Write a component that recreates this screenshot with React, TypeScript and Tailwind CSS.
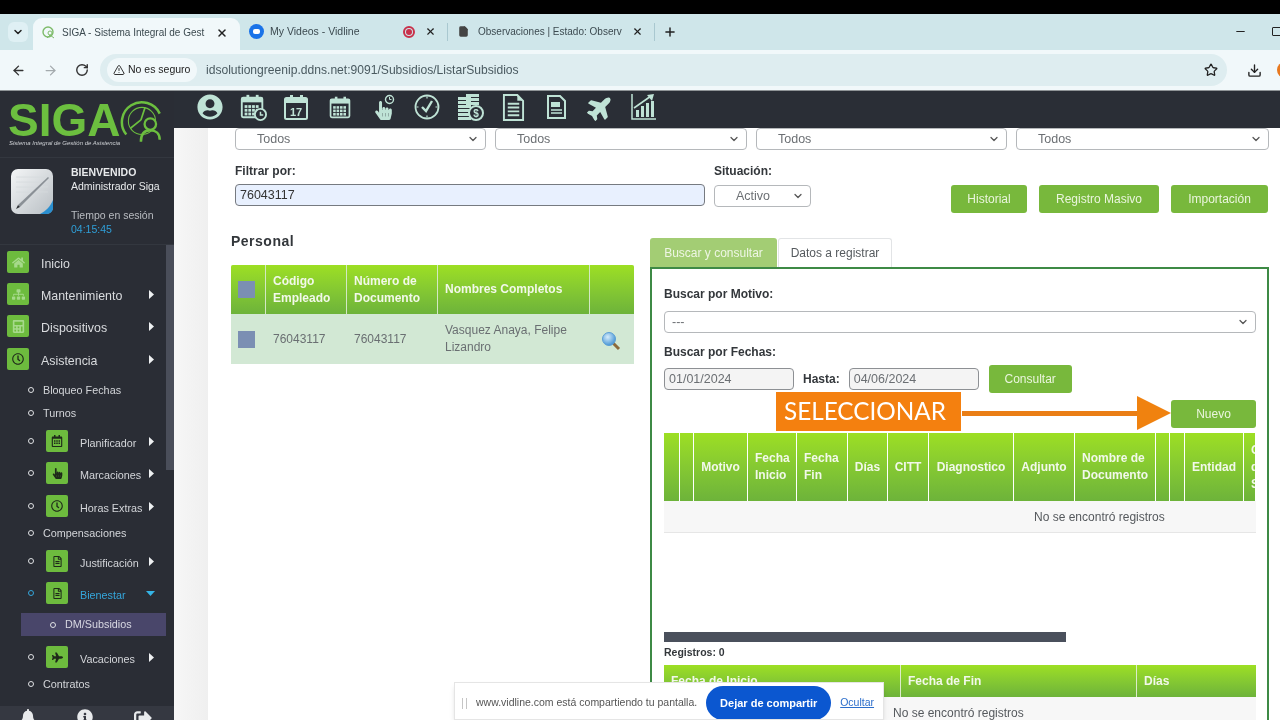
import React from "react";
import { ChevronDown, ArrowLeft, ArrowRight, RotateCw, TriangleAlert, Star, Download, X, Plus, Minus, File } from "lucide-react";
import { FaHome, FaSitemap, FaCalculator, FaRegClock, FaRegCalendarAlt, FaHandPointer, FaRegFileAlt, FaPlane, FaBell, FaInfoCircle, FaSignOutAlt, FaUserCircle } from "react-icons/fa";

const ic = "#bfe3d6";

function TopIcon({ children }: { children: React.ReactNode }) {
  return <div className="w-[43.4px] h-[28px] shrink-0 flex items-center justify-center">{children}</div>;
}

function CalBase({ num }: { num?: boolean }) {
  return (
    <>
      <rect x="3" y="5" width="22" height="21" rx="1.5" fill="none" stroke={ic} strokeWidth="2" />
      <rect x="3" y="5" width="22" height="5" fill={ic} />
      <rect x="8" y="2" width="3" height="6" fill={ic} />
      <rect x="18" y="2" width="3" height="6" fill={ic} />
      {!num && [13, 17, 21].map((y) => [6, 10, 14, 18].map((x) => <rect key={`${x}-${y}`} x={x} y={y} width="3" height="3" fill={ic} />))}
    </>
  );
}

function TopBar() {
  return (
    <div className="h-[37px] bg-[#2a2e36] flex items-start pt-[2px] pl-[14px] shrink-0">
      <TopIcon><FaUserCircle size={26} color={ic} /></TopIcon>
      <TopIcon>
        <svg width="28" height="28" viewBox="0 0 30 30"><CalBase /><circle cx="23" cy="23" r="6" fill="#2a2e36" stroke={ic} strokeWidth="2" /><path d="M23 20v3.5h3" stroke={ic} strokeWidth="1.6" fill="none" /></svg>
      </TopIcon>
      <TopIcon>
        <svg width="28" height="28" viewBox="0 0 28 28"><CalBase num /><text x="14" y="23" textAnchor="middle" fontSize="11" fontWeight="700" fill={ic} fontFamily="Liberation Sans">17</text></svg>
      </TopIcon>
      <TopIcon>
        <svg width="24" height="24" viewBox="0 0 28 28"><CalBase /></svg>
      </TopIcon>
      <TopIcon>
        <div className="relative w-[24px] h-[26px] flex items-end justify-center">
          <FaHandPointer size={19} color={ic} />
          <svg className="absolute right-0 top-0" width="11" height="11" viewBox="0 0 11 11"><circle cx="5.5" cy="5.5" r="4" fill="none" stroke={ic} strokeWidth="1.4" /><path d="M5.5 3v2.5h2" stroke={ic} fill="none" /></svg>
        </div>
      </TopIcon>
      <TopIcon>
        <svg width="26" height="26" viewBox="0 0 26 26"><circle cx="13" cy="13" r="11.5" fill="none" stroke={ic} strokeWidth="1.8" /><path d="M8 13l4 4 6-10" stroke={ic} strokeWidth="2.4" fill="none" /><path d="M13 2.5v2M13 21.5v2M2.5 13h2M21.5 13h2" stroke={ic} strokeWidth="1.2" /></svg>
      </TopIcon>
      <TopIcon>
        <svg width="28" height="28" viewBox="0 0 28 28">
          {[4, 8, 12, 16, 20, 24].map((y) => <rect key={y} x="2" y={y} width="13" height="3" fill={ic} />)}
          {[1, 5, 9].map((y) => <rect key={y} x="10" y={y} width="13" height="3" fill={ic} />)}
          <circle cx="20" cy="20" r="7" fill="#2a2e36" stroke={ic} strokeWidth="2" />
          <text x="20" y="24" textAnchor="middle" fontSize="10" fontWeight="700" fill={ic} fontFamily="Liberation Sans">$</text>
        </svg>
      </TopIcon>
      <TopIcon>
        <svg width="23" height="27" viewBox="0 0 24 28"><path d="M2 1h14l6 6v20H2z" fill="none" stroke={ic} strokeWidth="2" /><path d="M16 1v6h6" fill={ic} /><path d="M6 10h12M6 14h12M6 18h12M6 22h12" stroke={ic} strokeWidth="2" /></svg>
      </TopIcon>
      <TopIcon>
        <svg width="19" height="24" viewBox="0 0 19 24"><path d="M1 1h12l5 5v17H1z" fill="none" stroke={ic} strokeWidth="2" /><path d="M4 7h9v5H4z" fill={ic} /><path d="M4 15h11M4 18h11" stroke={ic} strokeWidth="1.5" /></svg>
      </TopIcon>
      <TopIcon><FaPlane size={27} color={ic} className="-rotate-45" /></TopIcon>
      <TopIcon>
        <svg width="26" height="26" viewBox="0 0 26 26"><path d="M1 0v25h24" stroke={ic} strokeWidth="1.5" fill="none" /><path d="M5 23v-7h3v7zM10 23V12h3v11zM15 23V9h3v14zM20 23V7h3v16z" fill={ic} /><path d="M3 14L20 2" stroke={ic} strokeWidth="1.6" /><path d="M16 1l7-1-2 7z" fill={ic} /></svg>
      </TopIcon>
    </div>
  );
}

function Arrow() {
  return (
    <svg width="5" height="9" viewBox="0 0 5 9" className="absolute left-[149px] top-[7px]">
      <path d="M0 0l5 4.5L0 9z" fill="#eef0f2" />
    </svg>
  );
}

function TopItem({ icon, label, arrow, cls }: { icon: React.ReactNode; label: string; arrow?: boolean; cls: string }) {
  return (
    <div className={`relative h-[22px] flex items-center pl-[7px] ${cls}`}>
      <div className="w-[22px] h-[22px] bg-[#6dbb3e] rounded-[2px] flex items-center justify-center">{icon}</div>
      <span className="ml-[12px] pt-[5px] text-[12.4px] text-[#d9dbde]">{label}</span>
      {arrow && <Arrow />}
    </div>
  );
}

function Dot({ blue }: { blue?: boolean }) {
  return <span className={`block w-[6px] h-[6px] rounded-full border ${blue ? "border-[#35a7dc]" : "border-[#dfe1e4]"}`} />;
}

function SubText({ label, cls }: { label: string; cls: string }) {
  return (
    <div className={`h-[16px] flex items-center pl-[28px] ${cls}`}>
      <Dot />
      <span className="ml-[9px] text-[10.8px] text-[#d3d5d9]">{label}</span>
    </div>
  );
}

function SubItem({ icon, label, blue, open, cls }: { icon: React.ReactNode; label: string; blue?: boolean; open?: boolean; cls: string }) {
  return (
    <div className={`relative h-[22px] flex items-center pl-[28px] ${cls}`}>
      <Dot blue={blue} />
      <div className="ml-[12px] w-[22px] h-[22px] bg-[#6dbb3e] rounded-[2px] flex items-center justify-center">{icon}</div>
      <span className={`ml-[12px] pt-[4px] text-[10.8px] ${blue ? "text-[#35a7dc]" : "text-[#d3d5d9]"}`}>{label}</span>
      {open ? (
        <svg width="9" height="5" viewBox="0 0 9 5" className="absolute left-[146px] top-[9px]"><path d="M0 0h9L4.5 5z" fill="#35b4e6" /></svg>
      ) : (
        <Arrow />
      )}
    </div>
  );
}

function Logo() {
  return (
    <div className="h-[67px] border-b border-[#33373f] pl-[8px] pt-[11px]">
      <div className="flex items-start h-[36px]">
        <span className="text-[46px] leading-[36px] font-bold text-[#6cbf3f]">SIGA</span>
        <svg width="46" height="46" viewBox="0 0 44 44" className="mt-[-3px]">
          <path d="M6 34A19 19 0 1 1 38 14" fill="none" stroke="#6cbf3f" strokeWidth="2.4" />
          <circle cx="21" cy="21" r="13" fill="none" stroke="#6cbf3f" strokeWidth="1" />
          <path d="M20 20L24 8M20 20L10 28" stroke="#6cbf3f" strokeWidth="1.6" />
          <circle cx="29" cy="24" r="5.5" fill="#2a2d35" stroke="#6cbf3f" strokeWidth="2.2" />
          <path d="M20 41c0-8 4-11 9-11s9 3 9 9" fill="none" stroke="#6cbf3f" strokeWidth="2.4" />
        </svg>
      </div>
      <div className="text-[6px] italic text-[#cfd2d6] leading-[8px] ml-[1px] mt-[1px]">Sistema Integral de Gestión de Asistencia</div>
    </div>
  );
}

function UserBox() {
  return (
    <div className="h-[87px] border-b border-[#33373f] flex pl-[10px] pt-[10px]">
      <svg width="44" height="47" viewBox="0 0 44 47">
        <defs>
          <linearGradient id="pad" x1="0" y1="0" x2="1" y2="1"><stop offset="0" stopColor="#f4f6f7" /><stop offset="1" stopColor="#b9bfc4" /></linearGradient>
        </defs>
        <rect x="1" y="1" width="42" height="45" rx="7" fill="url(#pad)" />
        <path d="M6 9h32M6 14h32M6 19h32M6 24h32" stroke="#d5dadd" strokeWidth="0.8" />
        <path d="M30 46c6-3 10-7 13-14v8c0 3-3 6-6 6z" fill="#2a8fd0" />
        <path d="M8 37L38 9l1 1L10 39z" fill="#8a9096" />
        <path d="M6 41l2-4 2 2z" fill="#2d3035" />
      </svg>
      <div className="ml-[17px] text-[10.5px] leading-[14px]">
        <div className="font-bold text-[#e8eaec] -mt-[3px]">BIENVENIDO</div>
        <div className="text-[#e8eaec]">Administrador Siga</div>
        <div className="text-[#b9bcc1] mt-[15px]">Tiempo en sesión</div>
        <div className="text-[#2f9fd8]">04:15:45</div>
      </div>
    </div>
  );
}

function Sidebar() {
  const l = "#a6d98b";
  const d = "#1f2a1a";
  return (
    <aside className="w-[174px] shrink-0 bg-[#2a2d35] flex flex-col relative h-full overflow-hidden">
      <Logo />
      <UserBox />
      <div className="absolute left-[166px] top-[154px] w-[8px] h-[225px] bg-[#4a4e5a]" />
      <nav className="pt-[6px] flex flex-col w-[166px]">
        <TopItem cls="" label="Inicio" icon={<FaHome size={13} color={l} />} />
        <TopItem cls="mt-[10px]" label="Mantenimiento" arrow icon={<FaSitemap size={13} color={l} />} />
        <TopItem cls="mt-[10px]" label="Dispositivos" arrow icon={<FaCalculator size={13} color={l} />} />
        <TopItem cls="mt-[11px]" label="Asistencia" arrow icon={<FaRegClock size={12} color={d} />} />
        <SubText cls="mt-[12px]" label="Bloqueo Fechas" />
        <SubText cls="mt-[7px]" label="Turnos" />
        <SubItem cls="mt-[9px]" label="Planificador" icon={<FaRegCalendarAlt size={12} color={d} />} />
        <SubItem cls="mt-[10px]" label="Marcaciones" icon={<FaHandPointer size={11} color={d} />} />
        <SubItem cls="mt-[11px]" label="Horas Extras" icon={<FaRegClock size={12} color={d} />} />
        <SubText cls="mt-[8px]" label="Compensaciones" />
        <SubItem cls="mt-[9px]" label="Justificación" icon={<FaRegFileAlt size={11} color={d} />} />
        <SubItem cls="mt-[10px]" label="Bienestar" blue open icon={<FaRegFileAlt size={11} color={d} />} />
        <div className="mt-[9px] ml-[21px] w-[145px] h-[23px] bg-[#49466a] flex items-center pl-[29px]">
          <Dot />
          <span className="ml-[9px] text-[10.8px] text-[#d8d8e2]">DM/Subsidios</span>
        </div>
        <SubItem cls="mt-[10px]" label="Vacaciones" icon={<FaPlane size={11} color={d} />} />
        <SubText cls="mt-[8px]" label="Contratos" />
      </nav>
      <div className="mt-auto h-[14px] bg-[#353841] flex items-start overflow-hidden pt-[3px] pl-[20px] gap-[41px]">
        <FaBell size={16} color="#e8eaec" />
        <FaInfoCircle size={16} color="#e8eaec" />
        <FaSignOutAlt size={18} color="#e8eaec" />
      </div>
    </aside>
  );
}

function Sel({ w, label, pl = "pl-[21px]" }: { w: string; label: string; pl?: string }) {
  return (
    <div className={`${w} h-[22px] border border-[#b5b8bb] rounded-[4px] bg-white flex items-center justify-between ${pl} pr-[6px] text-[12.5px] text-[#6b6f73]`}>
      <span>{label}</span>
      <ChevronDown size={12} strokeWidth={2.5} color="#555" />
    </div>
  );
}

function GreenBtn({ label, cls }: { label: string; cls: string }) {
  return <button className={`${cls} bg-[#78b83c] rounded-[3px] text-[#eaf5dd] text-[12px] flex items-center justify-center`}>{label}</button>;
}

function Check() {
  return <span className="block w-[17px] h-[17px] bg-[#7b8fb3]" />;
}

function Magnifier() {
  return (
    <svg width="20" height="20" viewBox="0 0 20 20">
      <defs>
        <radialGradient id="lens" cx="0.4" cy="0.35" r="0.7"><stop offset="0" stopColor="#d5ecfb" /><stop offset="1" stopColor="#3e8fd2" /></radialGradient>
      </defs>
      <path d="M12 12l6 6" stroke="#8c6a3c" strokeWidth="3" />
      <circle cx="8" cy="8" r="6.5" fill="url(#lens)" stroke="#5c9fd6" />
    </svg>
  );
}

const hdr = "bg-gradient-to-b from-[#9ddf22] to-[#6db33a] text-[#f2f8ea] font-bold text-[12px] leading-[17px] flex items-center";

function PersonalTable() {
  return (
    <div className="w-[403px] mt-[15px]">
      <div className="flex h-[49px] gap-[1px] bg-[#d3e8c4] rounded-t-[2px] overflow-hidden">
        <div className={`${hdr} w-[34px] pl-[7px]`}><Check /></div>
        <div className={`${hdr} w-[80px] pl-[7px]`}>Código<br />Empleado</div>
        <div className={`${hdr} w-[90px] pl-[7px]`}>Número de<br />Documento</div>
        <div className={`${hdr} w-[151px] pl-[7px]`}>Nombres Completos</div>
        <div className={`${hdr} flex-1`} />
      </div>
      <div className="flex h-[50px] bg-[#d2e8d4] text-[12px] text-[#6a6f72] items-center">
        <div className="w-[35px] pl-[7px]"><Check /></div>
        <div className="w-[81px] pl-[7px]">76043117</div>
        <div className="w-[91px] pl-[7px]">76043117</div>
        <div className="w-[152px] pl-[7px] leading-[17px]">Vasquez Anaya, Felipe<br />Lizandro</div>
        <div className="flex-1 pl-[11px] pt-[3px]"><Magnifier /></div>
      </div>
    </div>
  );
}

const cols: [string, React.ReactNode][] = [
  ["w-[15px]", ""],
  ["w-[13px]", ""],
  ["w-[53px] justify-center", "Motivo"],
  ["w-[48px] pl-[7px]", <>Fecha<br />Inicio</>],
  ["w-[50px] pl-[7px]", <>Fecha<br />Fin</>],
  ["w-[39px] justify-center", "Días"],
  ["w-[40px] justify-center", "CITT"],
  ["w-[84px] justify-center", "Diagnostico"],
  ["w-[60px] justify-center", "Adjunto"],
  ["w-[80px] pl-[7px]", <>Nombre de<br />Documento</>],
  ["w-[13px]", ""],
  ["w-[14px]", ""],
  ["w-[58px] justify-center", "Entidad"],
  ["w-[11px] pl-[7px] overflow-hidden", <>C<br />d<br />S</>],
];

function RightPanel() {
  return (
    <div className="w-[619px] ml-[16px] shrink-0">
      <div className="flex h-[29px] text-[12px]">
        <div className="w-[127px] bg-[#a3cd74] rounded-t-[3px] flex items-center justify-center text-[#eef6e4]">Buscar y consultar</div>
        <div className="w-[114px] ml-[1px] border border-b-0 border-[#e2e4e6] rounded-t-[3px] bg-white flex items-center justify-center text-[#555a5e]">Datos a registrar</div>
      </div>
      <div className="border-2 border-b-0 border-[#3e8a45] h-[500px] relative pl-[12px] pr-[12px] pt-[18px]">
        <div className="text-[12px] font-bold text-[#33373b] leading-[14px]">Buscar por Motivo:</div>
        <div className="mt-[10px]"><Sel w="w-[592px]" label="---" pl="pl-[7px]" /></div>
        <div className="mt-[12px] text-[12px] font-bold text-[#33373b] leading-[14px]">Buscar por Fechas:</div>
        <div className="mt-[5px] flex items-start h-[37px]">
          <div className="w-[130px] h-[22px] mt-[4px] border border-[#8d9094] rounded-[4px] bg-[#f4f4f4] text-[12.5px] text-[#6b6f73] flex items-center pl-[4px]">01/01/2024</div>
          <span className="ml-[9px] mt-[6px] text-[12px] font-bold text-[#33373b]">Hasta:</span>
          <div className="w-[130px] h-[22px] mt-[4px] ml-[9px] border border-[#8d9094] rounded-[4px] bg-[#f4f4f4] text-[12.5px] text-[#6b6f73] flex items-center pl-[4px]">04/06/2024</div>
          <GreenBtn cls="ml-[10px] w-[83px] h-[28px] mt-[1px]" label="Consultar" />
        </div>
        <div className="flex justify-end mt-[-1px] w-[592px]">
          <GreenBtn cls="w-[85px] h-[28px]" label="Nuevo" />
        </div>
        <div className="mt-[5px] w-[592px] overflow-hidden">
          <div className="flex h-[68px] gap-[1px] w-[640px]">
            {cols.map(([c, t], i) => (
              <div key={i} className={`${hdr} ${c} shrink-0`}>{t}</div>
            ))}
          </div>
          <div className="h-[32px] bg-[#f7f7f7] border-b border-[#e6e6e6] text-[12px] text-[#55595d] flex items-center pl-[370px]">No se encontró registros</div>
        </div>
        <div className="mt-[99px] w-[402px] h-[10px] bg-[#4a505c]" />
        <div className="mt-[3px] text-[10.5px] font-bold text-[#33373b] leading-[14px]">Registros: 0</div>
        <div className="mt-[6px] w-[592px]">
          <div className="flex h-[32px] gap-[1px] bg-[#dcebcb]">
            <div className={`${hdr} w-[236px] pl-[7px]`}>Fecha de Inicio</div>
            <div className={`${hdr} w-[235px] pl-[7px]`}>Fecha de Fin</div>
            <div className={`${hdr} flex-1 pl-[7px]`}>Días</div>
          </div>
          <div className="h-[32px] bg-[#f7f7f7] text-[12px] text-[#55595d] flex items-center pl-[229px]">No se encontró registros</div>
        </div>

        {/* annotation */}
        <div className="absolute left-[124px] top-[123px] w-[185px] h-[39px] bg-[#f4800f] text-white text-[24.3px] leading-[37px] pl-[8px] font-['Lato',sans-serif]">SELECCIONAR</div>
        <svg className="absolute left-[310px] top-[126px]" width="212" height="36" viewBox="0 0 212 36">
          <rect x="0" y="16" width="178" height="5" fill="#ea7e15" />
          <path d="M175 1L209 18 175 35z" fill="#f0820f" />
        </svg>
      </div>
    </div>
  );
}

function Main() {
  return (
    <main className="flex-1 flex flex-col min-w-0 bg-white h-full">
      <TopBar />
      <div className="flex-1 flex min-h-0 overflow-hidden">
        <div className="w-[34px] shrink-0 bg-gradient-to-r from-[#f7f7f7] to-[#efefef]" />
        <div className="flex-1 min-w-0">
          <div className="flex pl-[27px] gap-[9px]">
            <Sel w="w-[251px]" label="Todos" />
            <Sel w="w-[252px]" label="Todos" />
            <Sel w="w-[251px]" label="Todos" />
            <Sel w="w-[253px]" label="Todos" />
          </div>
          <div className="flex pl-[27px] mt-[14px] h-[48px]">
            <div className="w-[470px]">
              <div className="text-[12px] font-bold text-[#33373b] leading-[14px]">Filtrar por:</div>
              <div className="mt-[6px] w-[470px] h-[22px] rounded-[4px] border border-[#767a80] bg-[#e8f0fe] text-[12.5px] text-[#333] flex items-center pl-[4px]">76043117</div>
            </div>
            <div className="ml-[9px] w-[97px]">
              <div className="text-[12px] font-bold text-[#33373b] leading-[14px]">Situación:</div>
              <div className="mt-[7px]"><Sel w="w-[97px]" label="Activo" /></div>
            </div>
            <div className="ml-[140px] flex gap-[12px] mt-[21px]">
              <GreenBtn cls="w-[76px] h-[28px]" label="Historial" />
              <GreenBtn cls="w-[120px] h-[28px]" label="Registro Masivo" />
              <GreenBtn cls="w-[97px] h-[28px]" label="Importación" />
            </div>
          </div>
          <div className="flex pl-[23px] mt-[26px]">
            <div className="w-[403px] shrink-0">
              <div className="mt-[-6px] text-[14px] font-bold text-[#33373b] leading-[18px] tracking-[0.5px]">Personal</div>
              <PersonalTable />
            </div>
            <RightPanel />
          </div>
        </div>
      </div>
    </main>
  );
}

function TabStrip() {
  return (
    <div className="h-[36px] bg-[#cfe6ea] flex items-center relative text-[10.5px] text-[#3c4a50] shrink-0 pb-[1px]">
      <div className="ml-[8px] w-[20px] h-[20px] shrink-0 rounded-[6px] bg-[#dff0f4] flex items-center justify-center">
        <ChevronDown size={12} strokeWidth={3} color="#222" />
      </div>
      <div className="ml-[5px] w-[207px] h-[32px] shrink-0 self-end -mb-[1px] bg-[#f1f8fa] rounded-t-[9px] flex items-center pl-[8px] pb-[3px]">
        <svg width="15" height="15" viewBox="0 0 15 15" className="shrink-0"><circle cx="7" cy="7" r="5" fill="none" stroke="#7dbb6a" strokeWidth="1.4" /><circle cx="9" cy="8" r="2" fill="none" stroke="#7dbb6a" /><path d="M6 13l3-3 4 3" stroke="#7dbb6a" fill="none" /></svg>
        <span className="ml-[6px] w-[145px] whitespace-nowrap text-[10px]">SIGA - Sistema Integral de Gest</span>
        <X size={12} strokeWidth={3} color="#222" className="ml-[9px] shrink-0" />
      </div>
      <div className="ml-[9px] w-[15px] h-[15px] shrink-0 rounded-full bg-[#1a73e8] flex items-center justify-center">
        <span className="w-[7px] h-[5px] rounded-[2px] bg-white block" />
      </div>
      <span className="ml-[6px] w-[133px] shrink-0">My Videos - Vidline</span>
      <span className="w-[12px] h-[12px] shrink-0 rounded-full border-2 border-[#c9304a] flex items-center justify-center"><span className="block w-[6px] h-[6px] rounded-full bg-[#c9304a]" /></span>
      <X size={11} strokeWidth={2.5} color="#222" className="ml-[10px] shrink-0" />
      <span className="ml-[11px] w-px h-[18px] bg-[#a9c8d0] shrink-0" />
      <File size={11} strokeWidth={2.5} color="#444" fill="#444" className="ml-[10px] shrink-0" />
      <span className="ml-[9px] w-[145px] whitespace-nowrap shrink-0 text-[10px]">Observaciones | Estado: Observ</span>
      <X size={11} strokeWidth={2.5} color="#222" className="ml-[9px] shrink-0" />
      <span className="ml-[11px] w-px h-[18px] bg-[#a9c8d0] shrink-0" />
      <Plus size={14} strokeWidth={2.5} color="#222" className="ml-[8px] shrink-0" />
      <Minus size={13} strokeWidth={2} color="#222" className="ml-[557px] shrink-0" />
      <span className="ml-[25px] w-[9px] h-[9px] border border-[#222] rounded-[1px] block shrink-0" />
    </div>
  );
}

function AddressBar() {
  return (
    <div className="h-[41px] bg-[#f1f8fa] border-b border-[#8f9497] flex items-center shrink-0 overflow-hidden">
      <ArrowLeft size={15} strokeWidth={2.2} color="#333" className="ml-[11px] shrink-0" />
      <ArrowRight size={15} strokeWidth={2} color="#a4aaad" className="ml-[17px] shrink-0" />
      <RotateCw size={14} strokeWidth={2.4} color="#333" className="ml-[17px] shrink-0" />
      <div className="ml-[11px] w-[1127px] h-[32px] shrink-0 rounded-full bg-[#deedf0] flex items-center pl-[7px] pr-[9px]">
        <div className="w-[90px] h-[24px] rounded-full bg-[#f1f8fa] flex items-center pl-[6px] gap-[3px] text-[10.5px] text-[#222]">
          <TriangleAlert size={12} strokeWidth={2} color="#333" className="shrink-0" />
          <span>No es seguro</span>
        </div>
        <span className="ml-[9px] text-[12.1px] text-[#4a5a60]">idsolutiongreenip.ddns.net:9091/Subsidios/ListarSubsidios</span>
        <Star size={14} strokeWidth={2.2} color="#222" className="ml-auto" />
      </div>
      <Download size={15} strokeWidth={2.2} color="#222" className="ml-[20px] shrink-0" />
      <span className="ml-[15px] w-[16px] h-[16px] rounded-full bg-[#e8781e] shrink-0 block" />
    </div>
  );
}

function SharePopup() {
  return (
    <div className="absolute left-[454px] top-[682px] w-[430px] h-[38px] bg-white border border-[#e5e5e5] shadow-md flex items-center overflow-hidden text-[10.5px]">
      <span className="ml-[7px] w-[5px] h-[11px] border-x border-[#c5c5c5] block mt-[4px]" />
      <span className="ml-[9px] text-[#555] mt-[4px]">www.vidline.com está compartiendo tu pantalla.</span>
      <button className="ml-[9px] w-[125px] h-[34px] mt-[4px] bg-[#0b57d0] rounded-full text-white font-bold text-[11px]">Dejar de compartir</button>
      <span className="ml-[9px] text-[#2c6ecb] underline mt-[4px]">Ocultar</span>
    </div>
  );
}

export default function App() {
  return (
    <div className="relative w-[1280px] h-[720px] overflow-hidden bg-black flex flex-col font-['Liberation_Sans',Arial,sans-serif] blur-[0.4px]">
      <div className="h-[14px] bg-black shrink-0" />
      <TabStrip />
      <AddressBar />
      <div className="flex-1 min-h-0 flex">
        <Sidebar />
        <Main />
      </div>
      <SharePopup />
    </div>
  );
}
